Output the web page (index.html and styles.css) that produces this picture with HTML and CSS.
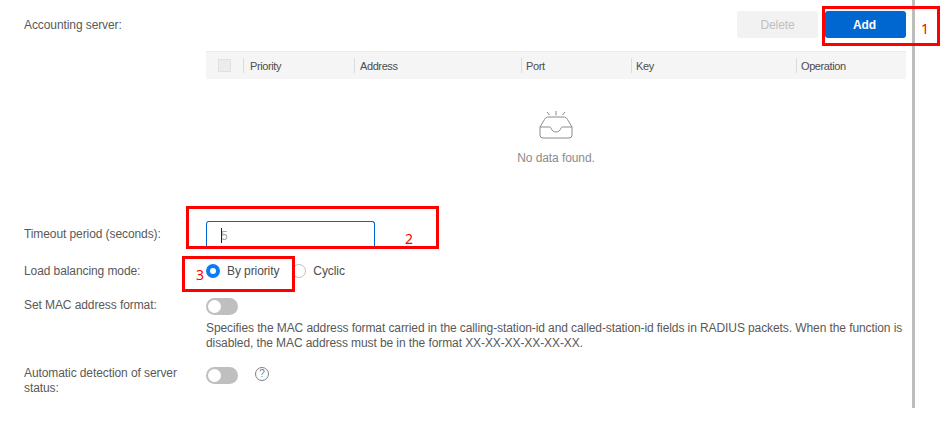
FILE: index.html
```html
<!DOCTYPE html>
<html lang="en">
<head>
<meta charset="utf-8">
<title>Accounting server</title>
<link rel="stylesheet" href="styles.css">
</head>
<body>
<main class="form">
  <section class="row row-server">
    <div class="label">Accounting server:</div>
    <div class="content">
      <div class="actions">
        <button class="btn btn-disabled" type="button">Delete</button>
        <button class="btn btn-primary" type="button">Add</button>
      </div>
      <div class="thead">
        <div class="cell cell-check"><span class="checkbox"></span></div>
        <div class="cell cell-priority">Priority</div>
        <div class="cell cell-address">Address</div>
        <div class="cell cell-port">Port</div>
        <div class="cell cell-key">Key</div>
        <div class="cell cell-op">Operation</div>
      </div>
      <div class="empty">
        <svg class="empty-icon" width="36" height="30" viewBox="0 0 36 30" fill="none" stroke="#8c8c8c" stroke-width="1">
          <path d="M18 1v4.500M9 2l2.500 3M27 2l-2.500 3"/>
          <path d="M6.500 9.500a4 4 0 0 1 3-2.500h17a4 4 0 0 1 3 2.500l4.500 7.500v8a3 3 0 0 1-3 3h-26a3 3 0 0 1-3-3v-8z"/>
          <path d="M2 17h9.500c1 0 1.300 .5 1.800 1.700 .7 2 2.400 3.300 4.700 3.300s4-1.300 4.700-3.300c.5-1.200 .8-1.700 1.800-1.700h9.500"/>
        </svg>
        <div class="empty-text">No data found.</div>
      </div>
    </div>
  </section>

  <section class="row row-timeout">
    <div class="label">Timeout period (seconds):</div>
    <div class="content">
      <div class="input"><span class="caret"></span><span class="value">5</span></div>
    </div>
  </section>

  <section class="row row-balance">
    <div class="label">Load balancing mode:</div>
    <div class="content radios">
      <span class="radio radio-on"></span><span class="radio-text radio-text-first">By priority</span>
      <span class="radio"></span><span class="radio-text">Cyclic</span>
    </div>
  </section>

  <section class="row row-mac">
    <div class="label">Set MAC address format:</div>
    <div class="content">
      <span class="switch"></span>
      <p class="hint">Specifies the MAC address format carried in the calling-station-id and called-station-id fields in RADIUS packets. When the function is disabled, the MAC address must be in the format XX-XX-XX-XX-XX-XX.</p>
    </div>
  </section>

  <section class="row row-auto">
    <div class="label label-narrow">Automatic detection of server status:</div>
    <div class="content inline">
      <span class="switch"></span>
      <span class="help">?</span>
    </div>
  </section>
</main>

<div class="scrollbar"></div>

<div class="mark mark-1"></div><span class="mark-num num-1">1</span>
<div class="mark mark-2"></div><span class="mark-num num-2">2</span>
<div class="mark mark-3"></div><span class="mark-num num-3">3</span>
</body>
</html>
```
FILE: styles.css
```css
* { box-sizing: border-box; }

html, body {
  margin: 0;
  height: 437px;
  overflow: hidden;
  background: #fff;
}

body {
  position: relative;
  font-family: "Liberation Sans", Arial, sans-serif;
  font-size: 12px;
  line-height: 16px;
  letter-spacing: -0.09px;
  color: #595959;
}

.form {
  width: 906px;
  padding: 11px 0 0 24px;
}

.row { display: flex; }
.label { width: 182px; flex: none; }
.label-narrow { width: 160px; margin-right: 22px; }
.content { flex: 1; min-width: 0; }

.row-server { height: 180px; }
.row-server .label { padding-top: 6px; }

.actions {
  display: flex;
  justify-content: flex-end;
  gap: 7px;
  height: 26px;
  margin-bottom: 14px;
}

.btn {
  width: 81px;
  height: 27px;
  border: 0;
  border-radius: 3px;
  font: inherit;
  letter-spacing: inherit;
  padding: 0;
}
.btn-disabled { background: #f2f2f2; color: #bfbfbf; }
.btn-primary { background: #0067d1; color: #fff; font-weight: bold; padding-right: 2px; }

.thead {
  display: flex;
  align-items: center;
  height: 28px;
  background: #f5f5f5;
  border-top: 1px solid #ececec;
  font-size: 11px;
  letter-spacing: -0.4px;
  color: #4d4d4d;
}

.cell {
  position: relative;
  padding-left: 6px;
  flex: none;
}
.cell::before {
  content: "";
  position: absolute;
  left: 0;
  top: 0;
  height: 15px;
  border-left: 1px solid #dcdcdc;
}
.cell-check { width: 37px; padding-left: 12px; height: 15px; }
.cell-check::before { display: none; }
.cell-priority { width: 111px; padding-left: 7px; }
.cell-address { width: 167px; }
.cell-port { width: 110px; padding-left: 5px; }
.cell-key { width: 165px; padding-left: 5px; }
.cell-op { width: 110px; padding-left: 5px; }

.checkbox {
  display: block;
  width: 13px;
  height: 13px;
  margin-top: 1px;
  background: #ececec;
  border: 1px solid #e0e0e0;
}

.empty {
  display: flex;
  flex-direction: column;
  align-items: center;
  padding: 31px 0 0 0;
}
.empty-icon { display: block; margin-bottom: 10px; }
.empty-text { color: #8c8c8c; }

.row-timeout { margin-top: 30px; height: 36px; }
.row-timeout .label { padding-top: 5px; }

.input {
  position: relative;
  width: 169px;
  height: 26px;
  border: 1px solid #0067d1;
  border-bottom: 0;
  border-radius: 3px 3px 0 0;
  padding: 6px 14px;
  color: #a6a6a6;
}
.caret {
  position: absolute;
  left: 14px;
  top: 6px;
  height: 15px;
  border-left: 1px solid #262626;
}

.row-balance { margin-top: 6px; height: 34px; }
.radios { display: flex; align-items: flex-start; }
.radio {
  width: 14px;
  height: 14px;
  margin-top: 1px;
  border: 1px solid #bfbfbf;
  border-radius: 50%;
  flex: none;
}
.radio-on { border: 4px solid #0a7cf5; background: #fff; }
.radio-text { margin-left: 7px; color: #4d4d4d; }
.radio-text-first { margin-right: 13px; }

.row-mac { height: 69px; }
.row-mac .content { padding-top: 1px; }
.switch {
  display: block;
  position: relative;
  width: 32px;
  height: 17px;
  border-radius: 9px;
  background: #bfbfbf;
}
.switch::after {
  content: "";
  position: absolute;
  left: 2px;
  top: 2px;
  width: 13px;
  height: 13px;
  border-radius: 50%;
  background: #fff;
}
.hint { margin: 6px 0 0; line-height: 15px; }

.row-auto { line-height: 15px; }
.inline { display: flex; align-items: flex-start; padding-top: 1px; }
.help {
  width: 14px;
  height: 14px;
  margin: 0 0 0 17px;
  border: 1px solid #808080;
  border-radius: 50%;
  font-size: 10px;
  line-height: 12px;
  text-align: center;
  color: #808080;
}

.scrollbar {
  position: absolute;
  left: 912px;
  top: 0;
  width: 3px;
  height: 408px;
  background: #bdbdbd;
}

.mark {
  position: absolute;
  border: 3px solid #f00;
}
.mark-1 { left: 822px; top: 6px; width: 118px; height: 40px; }
.mark-2 { left: 186px; top: 206px; width: 253px; height: 43px; }
.mark-3 { left: 182px; top: 256px; width: 113px; height: 36px; }

.mark-num {
  position: absolute;
  font-family: "Noto Sans", sans-serif;
  font-size: 14px;
  line-height: 16px;
  letter-spacing: 0;
  color: #f00;
}
.num-1 { left: 921px; top: 21px; }
.num-2 { left: 405px; top: 231px; }
.num-3 { left: 196px; top: 267px; }
```
